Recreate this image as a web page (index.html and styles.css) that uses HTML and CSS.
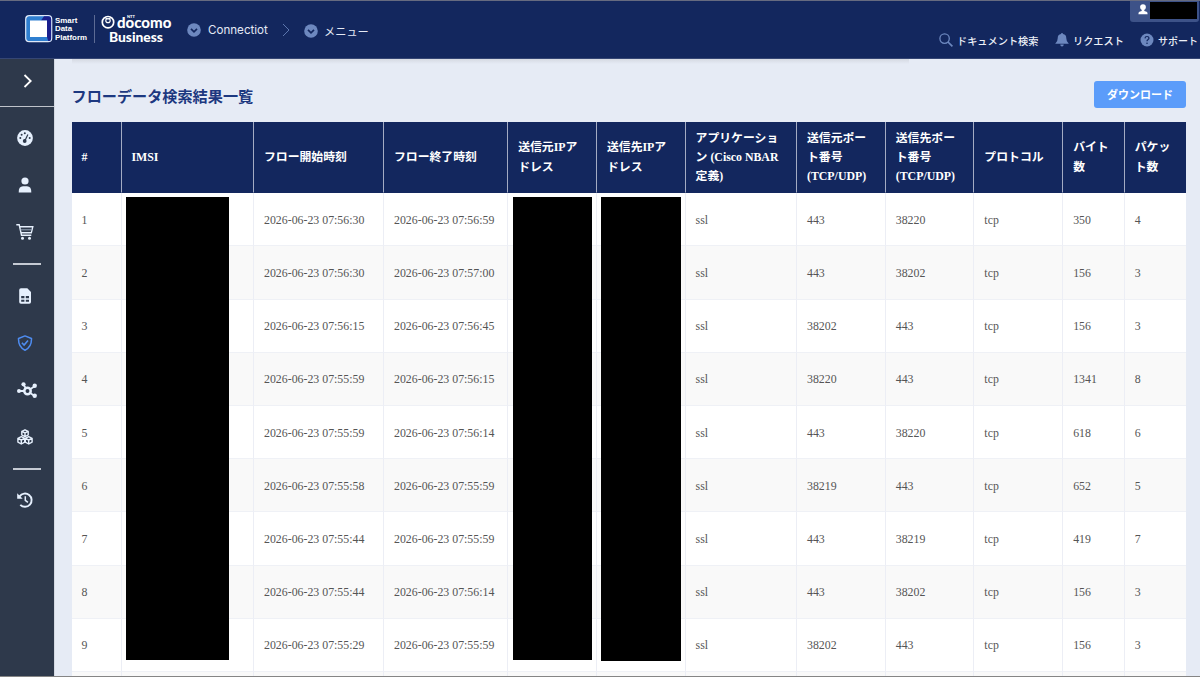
FILE: index.html
```
<!DOCTYPE html>
<html lang="ja">
<head>
    <meta charset="UTF-8">
    <meta name="viewport" content="width=device-width, initial-scale=1.0">
    <title>フローデータ検索結果一覧</title>
    <link rel="stylesheet" href="styles.css">
</head>
<body>

<header class="header">
    <div class="brand">
        <svg class="sdp-logo" viewBox="0 0 28 28">
            <rect x="0.7" y="0.7" width="26" height="26" rx="3.5" fill="#2f7fd0" stroke="#dfe8f8" stroke-width="1.2"/>
            <path d="M19 1.300h4.200q2.900 0 2.900 2.900v19q0 2.900-2.900 2.900L22 22V5.500h-6z" fill="#1a1f8c"/>
            <rect x="5" y="5.500" width="17" height="16.500" fill="#fff"/>
        </svg>
        <div class="sdp-name">Smart<br>Data<br>Platform</div>
        <div class="docomo">
            <div class="docomo-top">
                <svg class="ntt-logo" viewBox="0 0 14 14">
                    <circle cx="7" cy="7.2" r="5.700" fill="none" stroke="#fff" stroke-width="1.700"/>
                    <path d="M4.300 2.200Q5 4 7 4t2.700-1.800M7 3.500c-1.600 0-2.200 1-2.200 1.900S5.500 7.600 7 7.600s2.200-1.300 2.200-2.200S8.600 3.500 7 3.500z" fill="none" stroke="#fff" stroke-width="1.200"/>
                </svg>
                <span class="docomo-word">docomo<small>NTT</small></span>
            </div>
            <div class="docomo-business">Business</div>
        </div>
    </div>
    <nav class="crumbs">
        <svg class="chev" viewBox="0 0 14 14"><circle cx="7" cy="7" r="6.800" fill="#6d88bf"/><path d="M4 5.800l3 3 3-3" fill="none" stroke="#13275e" stroke-width="1.700"/></svg>
        <span class="crumb-service">Connectiot</span>
        <svg class="sep" viewBox="0 0 8 14"><path d="M1 1l6 6-6 6" fill="none" stroke="#5c76ae" stroke-width="1"/></svg>
        <svg class="chev chev-menu" viewBox="0 0 14 14"><circle cx="7" cy="7" r="6.800" fill="#6d88bf"/><path d="M4 5.800l3 3 3-3" fill="none" stroke="#13275e" stroke-width="1.700"/></svg>
        <span class="crumb-menu">メニュー</span>
    </nav>
    <div class="header-right">
        <div class="user">
            <svg viewBox="0 0 10 11"><circle cx="5" cy="3.100" r="2.900" fill="#fff"/><path d="M3.700 5h2.600v2l2.300.8q1 .5 1 2.400H.4q0-1.900 1-2.400L3.700 7z" fill="#fff"/></svg>
            <span class="user-name"></span>
        </div>
        <div class="tools">
            <svg class="tool-search" viewBox="0 0 14 14"><circle cx="5.600" cy="5.600" r="4.700" fill="none" stroke="#6d88bf" stroke-width="1.300"/><path d="M9 9l4.400 4.400" stroke="#6d88bf" stroke-width="1.700"/></svg>
            <span class="tool-docs">ドキュメント検索</span>
            <svg class="tool-bell" viewBox="0 0 14 14"><path d="M7 .1q1 0 1 .9 3.300.6 3.300 4.200 0 3.700 2.500 5.500H.2q2.500-1.800 2.500-5.500Q2.700 1.600 6 1q0-.9 1-.9zM5.200 11.500h3.600q-.2 2-1.800 2t-1.800-2z" fill="#6d88bf"/></svg>
            <span class="tool-request">リクエスト</span>
            <svg class="tool-help" viewBox="0 0 14 14"><circle cx="7" cy="7" r="6.500" fill="#6d88bf"/><path d="M5 5.400q.1-1.900 2-1.900t2 1.600q0 1-1.100 1.600-.9.500-.9 1.500" fill="none" stroke="#13275e" stroke-width="1.200"/><circle cx="7" cy="10.200" r=".8" fill="#13275e"/></svg>
            <span class="tool-support">サポート</span>
        </div>
    </div>
</header>

<div class="layout">
    <aside class="sidebar">
        <div class="toggle">
            <svg viewBox="0 0 10 14"><path d="M1.500 1l6.200 6-6.200 6" fill="none" stroke="#fff" stroke-width="1.800"/></svg>
        </div>
        <div class="side-item">
            <svg viewBox="0 0 16 16"><circle cx="8" cy="8" r="7.900" fill="#e6f0fd"/><g fill="#2e394b"><circle cx="3.300" cy="8" r="1"/><circle cx="4.600" cy="4.700" r="1"/><circle cx="7.800" cy="3.200" r="1"/><circle cx="12.700" cy="8" r="1"/><circle cx="7.700" cy="11" r="1.900"/></g><path d="M8 10.500l2.900-6" stroke="#2e394b" stroke-width="1.200"/></svg>
        </div>
        <div class="side-item">
            <svg viewBox="0 0 16 16"><circle cx="8" cy="4" r="3.600" fill="#e6f0fd"/><path d="M1.700 15.600q-.2-6.300 4.300-6.300h4q4.500 0 4.300 6.300z" fill="#e6f0fd"/></svg>
        </div>
        <div class="side-item">
            <svg class="cart" viewBox="0 0 18 16"><path d="M.3.800h2.900l2.300 10.400h9.800M3.800 2.800h13l-1.500 6H5" fill="none" stroke="#e6f0fd" stroke-width="1.400"/><path d="M4.400 5.800h11.500" stroke="#98a5b8" stroke-width="1"/><circle cx="6.500" cy="14.200" r="1.500" fill="#e6f0fd"/><circle cx="13.500" cy="14.200" r="1.500" fill="#e6f0fd"/></svg>
        </div>
        <div class="side-line"></div>
        <div class="side-item">
            <svg viewBox="0 0 16 16"><path d="M4 .2h6.300L14 4v10q0 1.800-1.800 1.800H4Q2.200 15.800 2.200 14V2Q2.200.2 4 .2z" fill="#e6f0fd"/><path d="M4.200 8h3.200v2.200H4.200zM8.800 8H12v2.200H8.800zM4.200 11.700h3.200v2H4.200zM8.800 11.700H12v2H8.800z" fill="#2e394b"/></svg>
        </div>
        <div class="side-item">
            <svg viewBox="0 0 16 16"><path d="M8 .9l6.500 2.600q.2 8.600-6.500 11.700Q1.300 12.100 1.500 3.500z" fill="none" stroke="#4e8cf0" stroke-width="1.500" stroke-linejoin="round"/><path d="M4.900 7.800l2.200 2.300L11 5.400" fill="none" stroke="#4e8cf0" stroke-width="1.600"/></svg>
        </div>
        <div class="side-item">
            <svg class="nodes" viewBox="0 0 20 16"><path d="M10.500 9L6.500 2.500M10.500 9h-9M10.500 9l7.500-5M10.500 9l7 5" stroke="#e6f0fd" stroke-width="1.800"/><circle cx="10.500" cy="9" r="3.200" fill="#2e394b" stroke="#e6f0fd" stroke-width="2.500"/><g fill="#e6f0fd"><circle cx="6.500" cy="2.300" r="2.100"/><circle cx="2" cy="9" r="2"/><circle cx="17.700" cy="3.800" r="2.200"/><circle cx="17.700" cy="13.800" r="2.200"/></g></svg>
        </div>
        <div class="side-item">
            <svg viewBox="0 0 16 16"><g fill="none" stroke="#e6f0fd" stroke-width="1.400" stroke-linejoin="round"><path d="M8 .8l3.200 1.500v3.700L8 7.700 4.800 6V2.300zM4.800 2.300L8 3.900l3.200-1.600M8 3.900v3.800"/><path d="M4.300 7.700l3.400 1.600v3.800l-3.400 1.900L.9 13.100V9.300zM.9 9.300l3.400 1.700 3.400-1.700M4.300 11v4"/><path d="M11.700 7.700l3.400 1.600v3.800L11.700 15l-3.400-1.900V9.300zM8.300 9.300l3.400 1.700 3.400-1.700M11.700 11v4"/></g></svg>
        </div>
        <div class="side-line"></div>
        <div class="side-item">
            <svg viewBox="0 0 16 16"><path d="M2.600 4.400A6.600 6.600 0 1 1 3.300 12.800" fill="none" stroke="#e6f0fd" stroke-width="1.900"/><path d="M.2 1.300v5.500h5.500z" fill="#e6f0fd"/><path d="M8.300 4.300v4l2.600 2" fill="none" stroke="#e6f0fd" stroke-width="1.500"/></svg>
        </div>
    </aside>

    <main class="main">
        <div class="title-row">
            <h1>フローデータ検索結果一覧</h1>
            <button class="download-btn">ダウンロード</button>
        </div>

        <div class="table-wrap">
            <div class="flow-table">
                <div class="row head">
                    <div>#</div>
                    <div>IMSI</div>
                    <div>フロー開始時刻</div>
                    <div>フロー終了時刻</div>
                    <div>送信元IPア<br>ドレス</div>
                    <div>送信先IPア<br>ドレス</div>
                    <div>アプリケーショ<br>ン (Cisco NBAR<br>定義)</div>
                    <div>送信元ポー<br>ト番号<br>(TCP/UDP)</div>
                    <div>送信先ポー<br>ト番号<br>(TCP/UDP)</div>
                    <div>プロトコル</div>
                    <div>バイト<br>数</div>
                    <div>パケッ<br>ト数</div>
                </div>
                <div class="row"><div>1</div><div></div><div>2026-06-23 07:56:30</div><div>2026-06-23 07:56:59</div><div></div><div></div><div>ssl</div><div>443</div><div>38220</div><div>tcp</div><div>350</div><div>4</div></div>
                <div class="row"><div>2</div><div></div><div>2026-06-23 07:56:30</div><div>2026-06-23 07:57:00</div><div></div><div></div><div>ssl</div><div>443</div><div>38202</div><div>tcp</div><div>156</div><div>3</div></div>
                <div class="row"><div>3</div><div></div><div>2026-06-23 07:56:15</div><div>2026-06-23 07:56:45</div><div></div><div></div><div>ssl</div><div>38202</div><div>443</div><div>tcp</div><div>156</div><div>3</div></div>
                <div class="row"><div>4</div><div></div><div>2026-06-23 07:55:59</div><div>2026-06-23 07:56:15</div><div></div><div></div><div>ssl</div><div>38220</div><div>443</div><div>tcp</div><div>1341</div><div>8</div></div>
                <div class="row"><div>5</div><div></div><div>2026-06-23 07:55:59</div><div>2026-06-23 07:56:14</div><div></div><div></div><div>ssl</div><div>443</div><div>38220</div><div>tcp</div><div>618</div><div>6</div></div>
                <div class="row"><div>6</div><div></div><div>2026-06-23 07:55:58</div><div>2026-06-23 07:55:59</div><div></div><div></div><div>ssl</div><div>38219</div><div>443</div><div>tcp</div><div>652</div><div>5</div></div>
                <div class="row"><div>7</div><div></div><div>2026-06-23 07:55:44</div><div>2026-06-23 07:55:59</div><div></div><div></div><div>ssl</div><div>443</div><div>38219</div><div>tcp</div><div>419</div><div>7</div></div>
                <div class="row"><div>8</div><div></div><div>2026-06-23 07:55:44</div><div>2026-06-23 07:56:14</div><div></div><div></div><div>ssl</div><div>443</div><div>38202</div><div>tcp</div><div>156</div><div>3</div></div>
                <div class="row"><div>9</div><div></div><div>2026-06-23 07:55:29</div><div>2026-06-23 07:55:59</div><div></div><div></div><div>ssl</div><div>38202</div><div>443</div><div>tcp</div><div>156</div><div>3</div></div>
                <div class="row cut"><div></div><div></div><div></div><div></div><div></div><div></div><div></div><div></div><div></div><div></div><div></div><div></div></div>
            </div>
            <div class="mask mask-imsi"></div>
            <div class="mask mask-src"></div>
            <div class="mask mask-dst"></div>
        </div>
    </main>
</div>

</body>
</html>
```
FILE: styles.css
```
* {
    box-sizing: border-box;
}
body {
    font-family: "Liberation Serif", "Noto Sans CJK JP", serif;
    margin: 0;
    height: 677px;
    overflow: hidden;
    display: flex;
    flex-direction: column;
    background: #e6ebf5;
    border-bottom: 1px solid #858585;
}
svg {
    display: block;
    flex: none;
}

/* header */
.header {
    height: 59px;
    flex: none;
    display: flex;
    background: #13275e;
    border-top: 1px solid #666b80;
    border-bottom: 1px solid #354674;
    color: #fff;
    font-family: Inter, "Noto Sans CJK JP", sans-serif;
    white-space: nowrap;
}
.brand {
    display: flex;
    width: 187px;
    padding: 14px 0 0 25px;
}
.sdp-logo {
    width: 28px;
    height: 28px;
}
.sdp-name {
    width: 41px;
    height: 27px;
    padding: 2px 0 0 2px;
    font-family: "Liberation Sans", sans-serif;
    font-size: 7.9px;
    font-weight: bold;
    line-height: 8.4px;
}
.docomo {
    height: 28px;
    padding-left: 6px;
    border-left: 1px solid #5d6b94;
}
.docomo-top {
    display: flex;
    height: 15px;
}
.ntt-logo {
    width: 14px;
    height: 14px;
}
.docomo-word {
    position: relative;
    margin-left: 2px;
    font-family: Lato, sans-serif;
    font-size: 15px;
    font-weight: 900;
    line-height: 14px;
}
.docomo-word small {
    position: absolute;
    left: 10px;
    top: 0;
    font-size: 4px;
    line-height: 4px;
}
.docomo-business {
    padding-left: 8px;
    font-family: Lato, sans-serif;
    font-size: 13.8px;
    font-weight: 900;
    line-height: 14px;
}
.crumbs {
    display: flex;
    align-items: center;
    height: 58px;
    color: #e4e9f5;
}
.chev {
    width: 14px;
    height: 14px;
}
.crumb-service {
    width: 60px;
    margin-left: 7px;
    font-size: 11.6px;
}
.sep {
    width: 8px;
    height: 14px;
    margin: 0 14px;
}
.chev-menu {
    margin-top: 2px;
}
.crumb-menu {
    margin: 2px 0 0 6px;
    font-size: 11.2px;
}
.header-right {
    flex: 1;
    display: flex;
    flex-direction: column;
    align-items: flex-end;
}
.user {
    display: flex;
    width: 69px;
    height: 21px;
    margin-right: 1px;
    padding: 1px 2px 0 7px;
    background: #3d5288;
    border-radius: 0 0 3px 3px;
}
.user svg {
    width: 10px;
    height: 11px;
    margin: 2px 2px 0 1px;
}
.user-name {
    width: 47px;
    height: 17px;
    background: #000;
}
.tools {
    display: flex;
    align-items: center;
    width: 261px;
    height: 16px;
    margin-top: 10px;
    font-size: 10.2px;
    font-weight: 500;
    color: #edf0f7;
}
.tools svg {
    width: 14px;
    height: 14px;
}
.tool-docs {
    width: 82px;
    margin: 1px 16px 0 4px;
}
.tool-request {
    width: 51px;
    margin: 1px 16px 0 4px;
}
.tool-support {
    margin: 1px 0 0 4px;
    font-size: 10px;
}

/* sidebar */
.layout {
    flex: 1;
    display: flex;
    min-height: 0;
}
.sidebar {
    width: 55px;
    flex: none;
    background: #2e394b;
    border-right: 1px solid #d4d9e2;
}
.toggle {
    height: 48px;
    display: flex;
    padding: 15px 0 0 23px;
    border-bottom: 1px solid #bfc3ca;
    margin-bottom: 7.5px;
}
.toggle svg {
    width: 10px;
    height: 14px;
}
.side-item {
    height: 47.2px;
    display: flex;
    align-items: center;
    justify-content: center;
    padding-right: 4px;
}
.side-item svg {
    width: 16px;
    height: 16px;
}
.side-item .cart {
    width: 18px;
}
.side-item .nodes {
    width: 20px;
    margin-left: 3px;
}
.side-line {
    width: 28px;
    height: 2px;
    margin: 7px 0 7px 13px;
    background: #c5cad3;
}

/* search results */
.main {
    flex: 1;
    min-width: 0;
    padding: 0 14px 0 16.5px;
}
.main::before {
    content: "";
    display: block;
    width: 837px;
    height: 5px;
    background: linear-gradient(#d5d9e2, #e6ebf5);
}
.title-row {
    display: flex;
    justify-content: space-between;
    height: 58px;
    padding-top: 17px;
}
h1 {
    margin: 4px 0 0;
    font-size: 15.15px;
    line-height: 24px;
    color: #1d3880;
}
.download-btn {
    width: 92px;
    height: 27px;
    padding: 0 0 1px;
    border: none;
    border-radius: 3px;
    background: #5b9cfa;
    color: #fff;
    font: bold 11px "Noto Sans CJK JP", sans-serif;
}
.table-wrap {
    position: relative;
}
.row {
    display: grid;
    grid-template-columns: 50px 132.5px 130px 124.2px 88.8px 88.6px 111.4px 88.8px 88.6px 88.8px 61.6px 1fr;
    height: 53.18px;
    background: #fff;
    color: #555;
    font-size: 11.85px;
}
.row:nth-child(odd) {
    background: #f9f9f9;
}
.row > div {
    display: flex;
    align-items: center;
    padding: 2px 0 0 10px;
    border-right: 1px solid #eceef5;
    border-bottom: 1px solid #eff1f6;
    white-space: nowrap;
}
.row > div:last-child {
    border-right: none;
}
.row.head {
    height: 71.3px;
    background: #13275e;
    color: #fff;
    font-weight: bold;
    line-height: 19.4px;
}
.row.head > div {
    padding-top: 1px;
    border-right-color: #a3abc3;
    border-bottom-color: #13275e;
}
.row.cut {
    height: 4px;
    background: #f9f9f9;
}
.row.cut > div {
    border-bottom: none;
}

/* masked columns */
.mask {
    position: absolute;
    top: 75px;
    height: 463px;
    background: #000;
}
.mask-imsi {
    left: 54px;
    width: 103.5px;
}
.mask-src {
    left: 441.5px;
    width: 79px;
}
.mask-dst {
    left: 529.5px;
    width: 79.5px;
    height: 464px;
}
```
